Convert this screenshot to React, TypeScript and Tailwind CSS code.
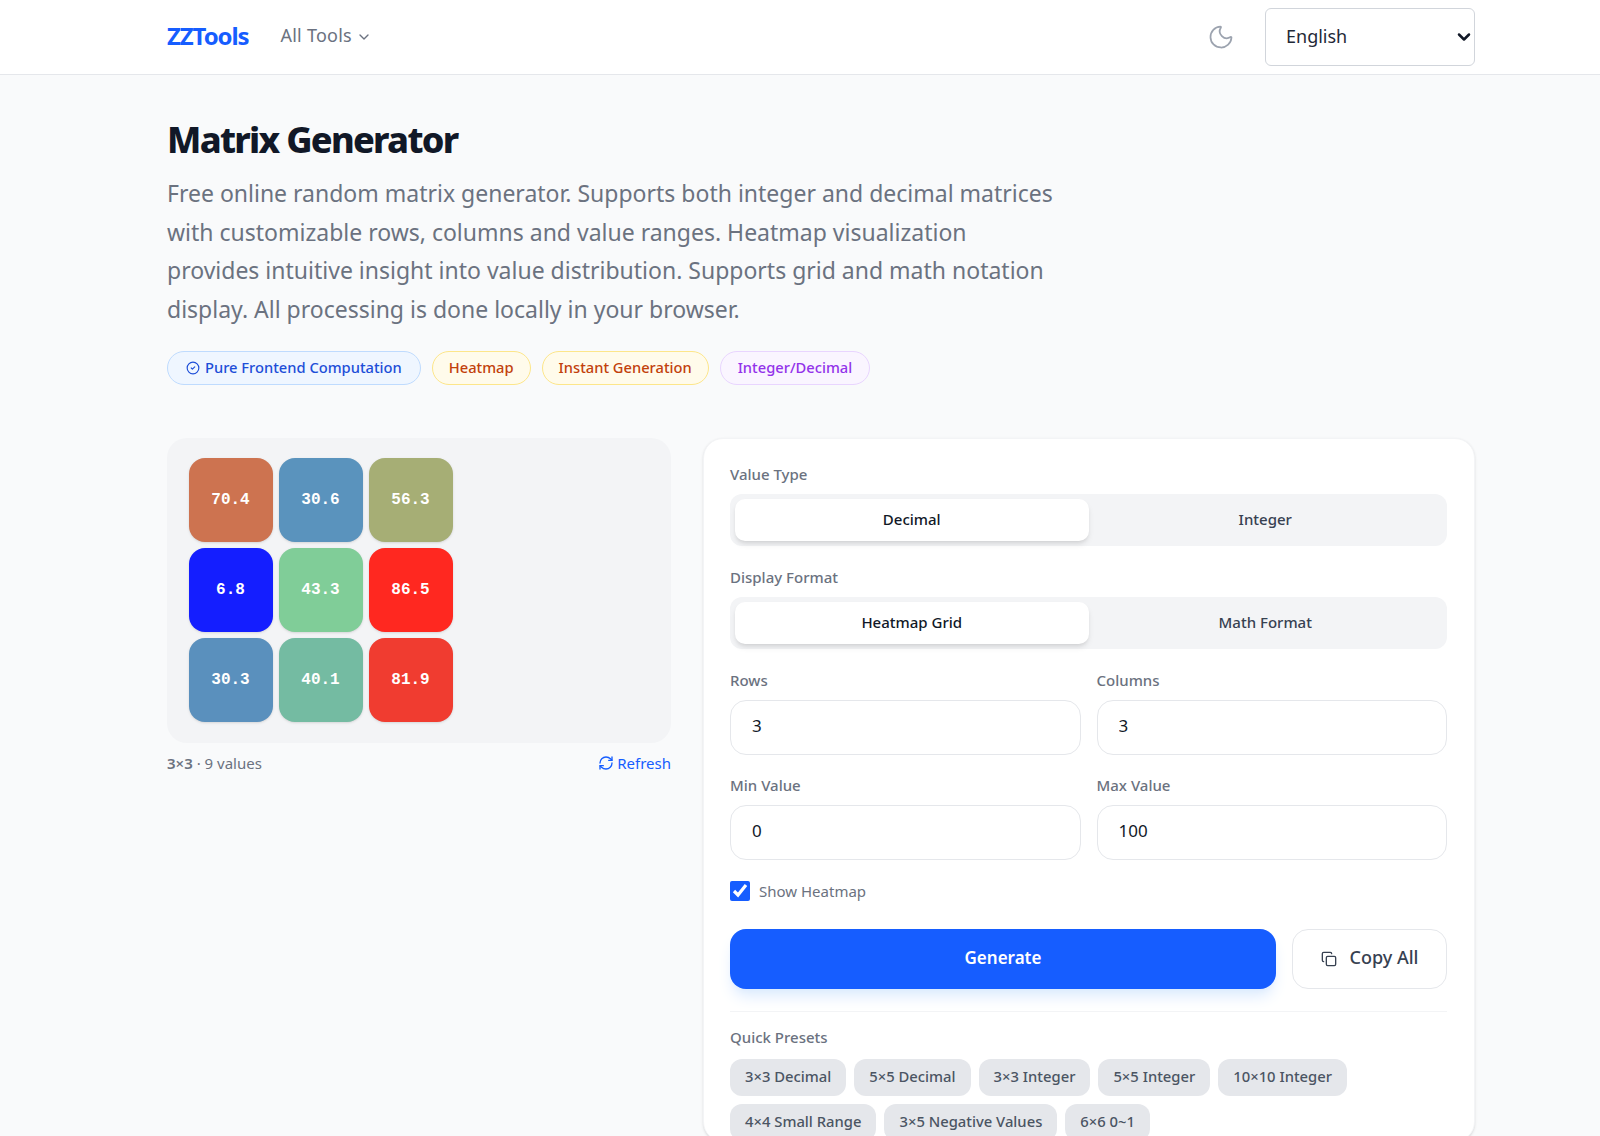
import { ChevronDown, CircleCheck, Copy, Moon, RefreshCw } from "lucide-react"

const cells = [
  { value: "70.4", color: "bg-[#cd7350]" },
  { value: "30.6", color: "bg-[#5a93bd]" },
  { value: "56.3", color: "bg-[#a6ae75]" },
  { value: "6.8", color: "bg-[#141eff]" },
  { value: "43.3", color: "bg-[#80cd98]" },
  { value: "86.5", color: "bg-[#ff2820]" },
  { value: "30.3", color: "bg-[#5a90bd]" },
  { value: "40.1", color: "bg-[#74bba2]" },
  { value: "81.9", color: "bg-[#f03c30]" },
]

const presets = [
  "3×3 Decimal",
  "5×5 Decimal",
  "3×3 Integer",
  "5×5 Integer",
  "10×10 Integer",
  "4×4 Small Range",
  "3×5 Negative Values",
  "6×6 0~1",
]

function Label({ children }: { children: string }) {
  return <div className="mb-[9px] h-5 text-[15px] leading-[18px] font-medium text-[#6b7280]">{children}</div>
}

function Segmented({ active, other }: { active: string; other: string }) {
  return (
    <div className="grid h-[52px] grid-cols-2 rounded-xl bg-[#f3f4f6] p-[5px] text-[15px] font-medium text-[#374151]">
      <div className="flex items-center justify-center rounded-[10px] bg-white pb-0.5 text-[#111827] shadow-md">{active}</div>
      <div className="flex items-center justify-center pb-0.5">{other}</div>
    </div>
  )
}

function NumberField({ label, value }: { label: string; value: string }) {
  return (
    <div>
      <Label>{label}</Label>
      <input
        readOnly
        value={value}
        className="h-[55px] w-full rounded-2xl border border-[#e5e7eb] bg-white px-[21px] pb-[3px] text-[17px] text-[#111827] outline-none"
      />
    </div>
  )
}

export default function App() {
  return (
    <div className="h-screen overflow-hidden bg-[#f9fafb] font-['Noto_Sans',sans-serif]">
      <header className="flex h-[75px] items-center border-b border-[#e5e7eb] bg-white pr-[125px] pb-px pl-[167px]">
        <span className="pb-0.5 text-2xl font-bold tracking-[-1.1px] text-[#165dff]">ZZTools</span>
        <span className="ml-8 flex items-center gap-1 text-[18px] tracking-[0.25px] text-[#6b7280]">
          <span className="pb-0.5">All Tools</span>
          <ChevronDown className="size-4" />
        </span>
        <Moon className="ml-auto size-7 text-[#9ca3af]" strokeWidth={1.5} />
        <div className="relative ml-[30px]">
          <select className="block h-[58px] w-[210px] appearance-none rounded-md border border-[#d1d5db] bg-white px-[20px] text-[18px] text-[#1f2937]">
            <option>English</option>
          </select>
          <ChevronDown className="absolute top-[19px] right-px size-5 text-[#111827]" strokeWidth={3} />
        </div>
      </header>

      <main className="pt-[45px] pr-[125px] pl-[167px]">
        <h1 className="text-4xl font-extrabold tracking-[-1.7px] text-[#111827]">Matrix Generator</h1>
        <p className="mt-[14px] max-w-[890px] text-[23px] leading-[38.7px] text-[#6b7280]">
          Free online random matrix generator. Supports both integer and decimal matrices with customizable rows, columns and value ranges. Heatmap visualization provides intuitive insight into value distribution. Supports grid and math notation display. All processing is done locally in your browser.
        </p>

        <div className="mt-[22px] flex gap-[11px] text-[14.7px] font-medium">
          <span className="flex h-[34px] items-center gap-[5px] rounded-full border border-[#bfdbfe] bg-[#eff6ff] px-[18px] pb-0.5 text-[#1d4ed8]">
            <CircleCheck className="mt-0.5 size-[14px]" />
            Pure Frontend Computation
          </span>
          <span className="flex h-[34px] items-center rounded-full border border-[#fde68a] bg-[#fffbeb] px-[16px] pb-0.5 text-[#c2410c]">Heatmap</span>
          <span className="flex h-[34px] items-center rounded-full border border-[#fde68a] bg-[#fffbeb] px-[16px] pb-0.5 text-[#c2410c]">Instant Generation</span>
          <span className="flex h-[34px] items-center rounded-full border border-[#e9d5ff] bg-[#faf5ff] px-[17px] pb-0.5 text-[#9333ea]">Integer/Decimal</span>
        </div>

        <div className="mt-[53px] grid grid-cols-[504px_1fr] gap-[32px]">
          <div>
            <div className="h-[305px] rounded-[20px] bg-[#f3f4f6] pt-5 pl-[21.5px]">
              <div className="grid w-fit grid-cols-[84px_84px_84px] gap-[6px]">
                {cells.map((cell) => (
                  <div
                    key={cell.value}
                    className={`flex h-[84px] items-center justify-center rounded-2xl font-['Liberation_Mono',monospace] text-base font-bold text-white shadow-sm ${cell.color}`}
                  >
                    {cell.value}
                  </div>
                ))}
              </div>
            </div>
            <div className="mt-[9px] flex items-center justify-between text-[15px] text-[#6b7280]">
              <span>
                <span className="font-semibold">3×3</span> · 9 values
              </span>
              <span className="flex items-center gap-[3px] text-[#165dff]">
                <RefreshCw className="size-4" />
                Refresh
              </span>
            </div>
          </div>

          <div className="rounded-[20px] border border-[#f3f4f6] bg-white pt-[26px] pr-[27px] pl-[26px] shadow-sm">
            <Label>Value Type</Label>
            <Segmented active="Decimal" other="Integer" />

            <div className="mt-[22px]">
              <Label>Display Format</Label>
              <Segmented active="Heatmap Grid" other="Math Format" />
            </div>

            <div className="mt-[22px] grid grid-cols-2 gap-4">
              <NumberField label="Rows" value="3" />
              <NumberField label="Columns" value="3" />
            </div>

            <div className="mt-[21px] grid grid-cols-2 gap-4">
              <NumberField label="Min Value" value="0" />
              <NumberField label="Max Value" value="100" />
            </div>

            <label className="mt-[21px] flex h-5 items-center gap-[9px] text-[15px] text-[#6b7280]">
              <input type="checkbox" readOnly checked className="size-5 accent-[#165dff]" />
              Show Heatmap
            </label>

            <div className="mt-[28px] flex gap-4">
              <button className="h-[60px] flex-1 rounded-2xl bg-[#165dff] pb-[3px] text-[17px] font-semibold text-white shadow-lg shadow-blue-100">
                Generate
              </button>
              <button className="flex h-[60px] w-[155px] items-center justify-center gap-[13px] rounded-2xl border border-[#e5e7eb] bg-white text-lg font-medium text-[#374151]">
                <Copy className="size-4" />
                <span className="pb-[3px]">Copy All</span>
              </button>
            </div>

            <div className="mt-[22px] border-t border-[#f3f4f6] pt-[16px]">
              <Label>Quick Presets</Label>
              <div className="mt-[11px] flex flex-wrap gap-2">
                {presets.map((preset) => (
                  <span
                    key={preset}
                    className="flex h-[37px] items-center rounded-xl bg-[#e5e7eb] px-[15px] pb-0.5 text-[14.8px] font-medium text-[#4b5563]"
                  >
                    {preset}
                  </span>
                ))}
              </div>
            </div>
          </div>
        </div>
      </main>
    </div>
  )
}
